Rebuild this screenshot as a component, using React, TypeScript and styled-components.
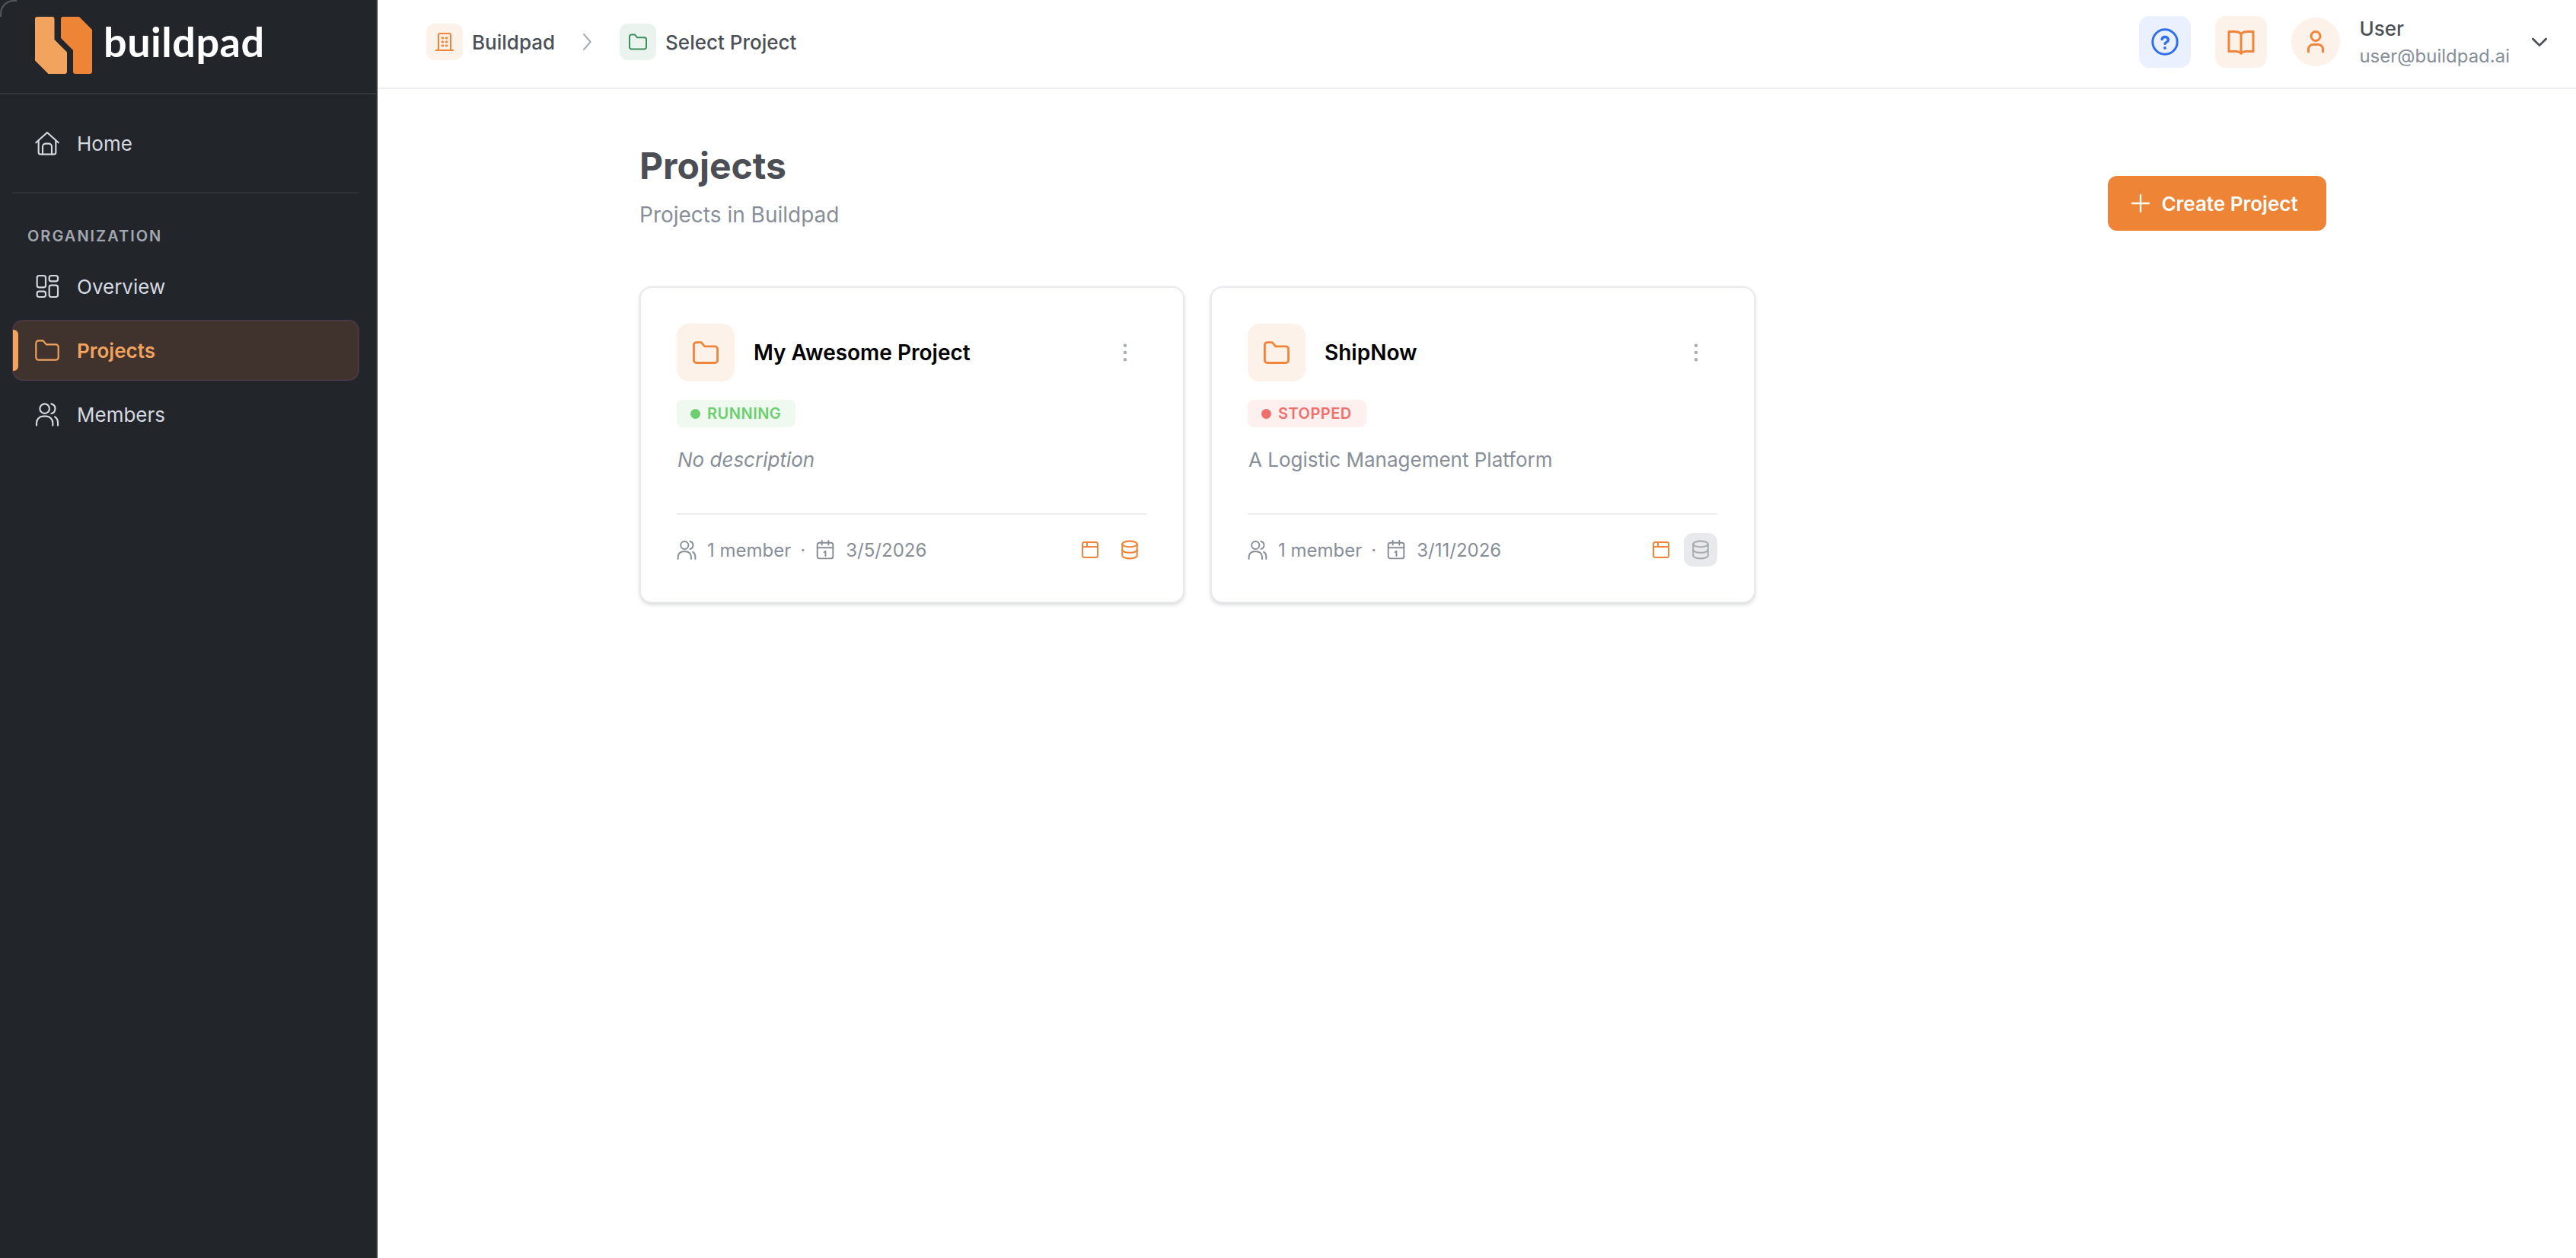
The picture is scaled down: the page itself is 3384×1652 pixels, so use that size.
import React from "react";
import styled, { createGlobalStyle } from "styled-components";

const Global = createGlobalStyle`
  html, body { margin: 0; padding: 0; background: #fff; }
  body { font-family: Inter, "Noto Sans", "Liberation Sans", sans-serif; -webkit-font-smoothing: antialiased; }
  * { box-sizing: border-box; }
`;

const Shell = styled.div`
  display: flex;
  min-height: 1652px;
  background: #fff;
`;

const Sidebar = styled.aside`
  position: relative;
  flex: 0 0 496px;
  background: #22252a;
  border-right: 2px solid #2f3237;
  &::before {
    content: "";
    position: absolute;
    top: 0;
    left: 0;
    width: 20px;
    height: 20px;
    border-top: 2px solid #55585c;
    border-left: 2px solid #55585c;
    border-top-left-radius: 18px;
  }
`;

const Brand = styled.div`
  height: 124px;
  padding: 22px 0 0 46px;
  display: flex;
  align-items: flex-start;
  gap: 15px;
  border-bottom: 2px solid #33363c;
`;

const Wordmark = styled.span`
  font-family: Lato, "Open Sans", sans-serif;
  font-weight: 700;
  font-size: 54px;
  line-height: 75px;
  letter-spacing: 0.5px;
  color: #fff;
  margin-top: -5px;
`;

const Nav = styled.nav`
  padding: 24px 22px 0 16px;
  display: flex;
  flex-direction: column;
`;

const NavDivider = styled.div`
  height: 2px;
  background: #2f3237;
  margin: 24px 0 42px;
`;

const SectionLabel = styled.div`
  font-size: 20px;
  line-height: 28px;
  font-weight: 600;
  letter-spacing: 2px;
  color: #a2a8b2;
  padding-left: 20px;
  margin-bottom: 12px;
`;

const NavList = styled.div`
  display: flex;
  flex-direction: column;
  gap: 4px;
`;

const NavRow = styled.div<{ $active?: boolean }>`
  position: relative;
  height: 80px;
  display: flex;
  align-items: center;
  gap: 23px;
  padding-left: 28px;
  border-radius: 14px;
  border: 2px solid ${(p) => (p.$active ? "#4a3944" : "transparent")};
  background: ${(p) => (p.$active ? "#40322c" : "transparent")};
  color: ${(p) => (p.$active ? "#f2a35e" : "#d5d9e0")};
  font-size: 26px;
  font-weight: ${(p) => (p.$active ? 600 : 400)};
`;

const ActiveBar = styled.span`
  position: absolute;
  left: -1px;
  top: 11px;
  bottom: 11px;
  width: 7px;
  background: #f2a35e;
  border-radius: 0 6px 6px 0;
`;

const Main = styled.main`
  flex: 1;
  min-width: 0;
  display: flex;
  flex-direction: column;
`;

const Topbar = styled.header`
  height: 117px;
  padding: 0 32px 5px 64px;
  display: flex;
  align-items: center;
  justify-content: space-between;
  border-bottom: 2px solid #eeeef3;
`;

const Crumbs = styled.div`
  display: flex;
  align-items: center;
  gap: 26px;
`;

const Crumb = styled.div`
  display: flex;
  align-items: center;
  gap: 12px;
  font-size: 26px;
  font-weight: 500;
  color: #4b5057;
`;

const CrumbIcon = styled.div<{ $bg: string; $fg: string }>`
  width: 48px;
  height: 48px;
  border-radius: 11px;
  display: flex;
  align-items: center;
  justify-content: center;
  background: ${(p) => p.$bg};
  color: ${(p) => p.$fg};
`;

const CrumbSeparator = styled.span`
  display: flex;
  color: #a7adb8;
  margin-right: 1px;
`;

const Account = styled.div`
  display: flex;
  align-items: center;
`;

const SquareButton = styled.button<{ $bg: string; $fg: string }>`
  width: 68px;
  height: 68px;
  margin-right: 32px;
  border: 0;
  padding: 0;
  border-radius: 14px;
  display: flex;
  align-items: center;
  justify-content: center;
  background: ${(p) => p.$bg};
  color: ${(p) => p.$fg};
`;

const Avatar = styled.div`
  width: 64px;
  height: 64px;
  border-radius: 50%;
  display: flex;
  align-items: center;
  justify-content: center;
  background: #fdf2e9;
  color: #f0853a;
  margin-right: 25px;
`;

const UserText = styled.div`
  display: flex;
  flex-direction: column;
  margin-right: 23px;
  padding-top: 2px;
`;

const UserName = styled.div`
  font-size: 26px;
  line-height: 36px;
  font-weight: 500;
  color: #4b5057;
`;

const UserMail = styled.div`
  font-size: 24px;
  line-height: 36px;
  color: #878e98;
`;

const AccountChevron = styled.span`
  display: flex;
  color: #4b5057;
`;

const Content = styled.div`
  padding: 71px 328px 0 344px;
`;

const PageHead = styled.div`
  display: flex;
  align-items: flex-end;
  justify-content: space-between;
`;

const PageTitle = styled.h1`
  margin: 0 0 13px;
  font-size: 48px;
  line-height: 60px;
  font-weight: 700;
  color: #4b4f55;
`;

const PageSub = styled.p`
  margin: 0;
  font-size: 28px;
  line-height: 42px;
  color: #878e98;
`;

const PrimaryButton = styled.button`
  width: 287px;
  height: 72px;
  border: 0;
  padding: 0 8px 0 0;
  border-radius: 12px;
  background: #ee8436;
  color: #fff;
  font-family: inherit;
  font-size: 26px;
  font-weight: 600;
  display: flex;
  align-items: center;
  justify-content: center;
  gap: 13px;
`;

const CardGrid = styled.div`
  margin-top: 73px;
  display: grid;
  grid-template-columns: repeat(3, 1fr);
  gap: 34px;
`;

const Card = styled.article`
  height: 416px;
  padding: 47px 48px 46px 47px;
  border: 2px solid #e8eaee;
  border-radius: 16px;
  background: #fff;
  box-shadow: 0 3px 5px rgba(30, 35, 45, 0.14), 0 0 0 1px rgba(30, 35, 45, 0.02);
  display: flex;
  flex-direction: column;
`;

const CardTop = styled.div`
  display: flex;
  align-items: center;
  gap: 25px;
`;

const CardIcon = styled.div`
  flex: 0 0 76px;
  height: 76px;
  border-radius: 16px;
  display: flex;
  align-items: center;
  justify-content: center;
  background: #fdf2e9;
  color: #f0853a;
`;

const CardTitle = styled.h2`
  flex: 1;
  margin: 0;
  font-size: 28px;
  font-weight: 600;
  color: #000;
`;

const Kebab = styled.div`
  width: 56px;
  height: 56px;
  display: flex;
  align-items: center;
  justify-content: center;
  color: #a7adb8;
`;

const StatusBadge = styled.div<{ $bg: string; $fg: string }>`
  align-self: flex-start;
  margin-top: 24px;
  height: 36px;
  padding: 0 19px 0 18px;
  border-radius: 8px;
  display: flex;
  align-items: center;
  gap: 9px;
  font-size: 20px;
  font-weight: 600;
  letter-spacing: 0.5px;
  background: ${(p) => p.$bg};
  color: ${(p) => p.$fg};
`;

const StatusDot = styled.span`
  width: 13px;
  height: 13px;
  border-radius: 50%;
  background: currentColor;
`;

const Description = styled.p<{ $empty?: boolean }>`
  margin: 23px 0 0 1px;
  font-size: 26px;
  line-height: 40px;
  color: #878e98;
  font-style: ${(p) => (p.$empty ? "italic" : "normal")};
`;

const CardFooter = styled.div`
  margin-top: auto;
  padding-top: 24px;
  border-top: 2px solid #eceef2;
  display: flex;
  align-items: center;
  justify-content: space-between;
`;

const Meta = styled.div`
  display: flex;
  align-items: center;
  font-size: 24px;
  color: #878e98;
`;

const MetaItem = styled.span`
  display: flex;
  align-items: center;
  gap: 14px;
`;

const MetaDot = styled.span`
  margin: 0 13px 0 12px;
  width: 7px;
  text-align: center;
`;

const ServiceIcons = styled.div`
  display: flex;
  gap: 8px;
`;

const ServiceChip = styled.div<{ $off?: boolean }>`
  width: 44px;
  height: 44px;
  border-radius: 12px;
  display: flex;
  align-items: center;
  justify-content: center;
  background: ${(p) => (p.$off ? "#e7e9ed" : "transparent")};
  color: ${(p) => (p.$off ? "#a8adb5" : "#f0853a")};
`;

type IconProps = { size?: number; stroke?: number };

const Svg = ({
  size = 32,
  stroke = 1.6,
  box = 24,
  children,
}: IconProps & { box?: number; children: React.ReactNode }) => (
  <svg
    width={size}
    height={size}
    viewBox={`0 0 ${box} ${box}`}
    fill="none"
    stroke="currentColor"
    strokeWidth={stroke}
    strokeLinecap="round"
    strokeLinejoin="round"
    style={{ flexShrink: 0 }}
  >
    {children}
  </svg>
);

const HomeIcon = (p: IconProps) => (
  <Svg {...p}>
    <path d="M1 11.5 12 1.5l11 10" />
    <path d="M3.5 9.5V21a2 2 0 0 0 2 2h13a2 2 0 0 0 2-2V9.5" />
    <path d="M7.5 23v-7.5a3 3 0 0 1 3-3h3a3 3 0 0 1 3 3V23" />
  </Svg>
);

const GridIcon = (p: IconProps) => (
  <Svg {...p}>
    <rect x="2" y="1.5" width="8.5" height="11.5" rx="2" />
    <rect x="14" y="1.5" width="8.5" height="5.5" rx="2" />
    <rect x="14" y="11" width="8.5" height="11.5" rx="2" />
    <rect x="2" y="17" width="8.5" height="5.5" rx="2" />
  </Svg>
);

const FolderIcon = (p: IconProps) => (
  <Svg {...p}>
    <path d="M1 5a2.5 2.5 0 0 1 2.5-2.5h4.4l3.2 3.8h9.4A2.5 2.5 0 0 1 23 8.800v10.200a2.5 2.5 0 0 1-2.5 2.500h-17A2.5 2.5 0 0 1 1 19z" />
  </Svg>
);

const UsersIcon = (p: IconProps) => (
  <Svg {...p}>
    <circle cx="9.5" cy="6.5" r="4.7" />
    <path d="M16 1.800a4.800 4.800 0 0 1 0 9.400" />
    <path d="M1.500 23v-2.500a6.500 6.500 0 0 1 6.500-6.500h3a6.500 6.500 0 0 1 6.500 6.500V23" />
    <path d="M19.500 14.600a6.500 6.500 0 0 1 3 5.400v3" />
  </Svg>
);

const CalendarIcon = (p: IconProps) => (
  <Svg {...p}>
    <rect x="2.500" y="3.500" width="19" height="19" rx="2.500" />
    <path d="M2.500 9.500h19M8 1v5M16 1v5" />
    <path d="M10.800 14.800l1.600-1v5.500" />
  </Svg>
);

const BuildingIcon = (p: IconProps) => (
  <Svg {...p}>
    <path d="M4 23V3a2 2 0 0 1 2-2h12a2 2 0 0 1 2 2v20" />
    <path d="M.800 23h22.400" />
    <path d="M9 7h.8M14.200 7h.8M9 12h.8M14.200 12h.8M9 17h.8M14.200 17h.8" strokeWidth={2.8} />
  </Svg>
);

const HelpIcon = (p: IconProps) => (
  <Svg size={36} stroke={3} box={36} {...p}>
    <circle cx="18" cy="18" r="16.200" />
    <path d="M14 14.500a4.300 4.300 0 0 1 8.400.900c0 2.600-4.300 3.200-4.300 5" strokeWidth={3.4} />
    <path d="M18 26v.1" strokeWidth={3.8} />
  </Svg>
);

const BookIcon = (p: IconProps) => (
  <Svg size={36} stroke={3} box={36} {...p}>
    <path d="M18 7.500C16 5.500 13 4.500 10 4.500H2V30.500H11C14 30.500 16.500 31.500 18 33C19.500 31.500 22 30.500 25 30.500H34V4.500H26C23 4.500 20 5.500 18 7.500Z" />
    <path d="M18 7.500V33" />
  </Svg>
);

const PersonIcon = (p: IconProps) => (
  <Svg size={30} stroke={3} box={30} {...p}>
    <circle cx="15" cy="7.500" r="6" />
    <path d="M5.500 28v-3.500a6 6 0 0 1 6-6h7a6 6 0 0 1 6 6V28" />
  </Svg>
);

const AppIcon = (p: IconProps) => (
  <Svg size={24} stroke={2} {...p}>
    <rect x="2" y="2" width="20" height="20" rx="2.500" />
    <path d="M2 8h20M8 2v6" />
  </Svg>
);

const DatabaseIcon = (p: IconProps) => (
  <Svg size={26} stroke={1.9} {...p}>
    <ellipse cx="12" cy="5" rx="9" ry="3.500" />
    <path d="M3 5v14c0 1.900 4 3.500 9 3.500s9-1.600 9-3.500V5" />
    <path d="M3 12c0 1.900 4 3.500 9 3.500s9-1.600 9-3.500" />
  </Svg>
);

const ChevronRight = () => (
  <Svg size={32} stroke={1.5}>
    <path d="m9 4.500 6.500 7.500L9 19.500" />
  </Svg>
);

const ChevronDown = () => (
  <Svg size={32} stroke={2}>
    <path d="m5.500 9 6.500 6.500L18.500 9" />
  </Svg>
);

const PlusIcon = () => (
  <Svg size={28} stroke={2}>
    <path d="M12 2.500v19M2.500 12h19" />
  </Svg>
);

const KebabIcon = () => (
  <Svg size={32} stroke={3.400}>
    <path d="M12 5v.01M12 12v.01M12 19v.01" />
  </Svg>
);

const LogoMark = () => (
  <svg width="75" height="75" viewBox="0 0 75 75">
    <path
      d="M3 0H22.500A3 3 0 0 1 25.500 3V30L42 46.500V72A3 3 0 0 1 39 75H17.500L0 57.500V3A3 3 0 0 1 3 0Z"
      fill="#f2a35e"
    />
    <path
      d="M36 0H58L75 17V72A3 3 0 0 1 72 75H53A3 3 0 0 1 50 72V44L34 28V3A3 3 0 0 1 36 0Z"
      fill="#ee8436"
    />
  </svg>
);

type ProjectCardProps = {
  name: string;
  running: boolean;
  description?: string;
  date: string;
  dbOff?: boolean;
};

const ProjectCard = ({ name, running, description, date, dbOff }: ProjectCardProps) => (
  <Card>
    <CardTop>
      <CardIcon>
        <FolderIcon size={34} stroke={2} />
      </CardIcon>
      <CardTitle>{name}</CardTitle>
      <Kebab>
        <KebabIcon />
      </Kebab>
    </CardTop>
    <StatusBadge $bg={running ? "#eff9f0" : "#fdf0ef"} $fg={running ? "#6ccf6f" : "#ef6f6c"}>
      <StatusDot />
      {running ? "RUNNING" : "STOPPED"}
    </StatusBadge>
    <Description $empty={!description}>{description ?? "No description"}</Description>
    <CardFooter>
      <Meta>
        <MetaItem>
          <UsersIcon size={26} stroke={1.8} />1 member
        </MetaItem>
        <MetaDot>·</MetaDot>
        <MetaItem>
          <CalendarIcon size={26} stroke={1.8} />
          {date}
        </MetaItem>
      </Meta>
      <ServiceIcons>
        <ServiceChip>
          <AppIcon />
        </ServiceChip>
        <ServiceChip $off={dbOff}>
          <DatabaseIcon />
        </ServiceChip>
      </ServiceIcons>
    </CardFooter>
  </Card>
);

export default function App() {
  return (
    <Shell>
      <Global />
      <Sidebar>
        <Brand>
          <LogoMark />
          <Wordmark>buildpad</Wordmark>
        </Brand>
        <Nav>
          <NavRow>
            <HomeIcon />
            Home
          </NavRow>
          <NavDivider />
          <SectionLabel>ORGANIZATION</SectionLabel>
          <NavList>
            <NavRow>
              <GridIcon />
              Overview
            </NavRow>
            <NavRow $active>
              <ActiveBar />
              <FolderIcon />
              Projects
            </NavRow>
            <NavRow>
              <UsersIcon />
              Members
            </NavRow>
          </NavList>
        </Nav>
      </Sidebar>
      <Main>
        <Topbar>
          <Crumbs>
            <Crumb>
              <CrumbIcon $bg="#fdf2e9" $fg="#f0853a">
                <BuildingIcon size={24} stroke={2} />
              </CrumbIcon>
              Buildpad
            </Crumb>
            <CrumbSeparator>
              <ChevronRight />
            </CrumbSeparator>
            <Crumb>
              <CrumbIcon $bg="#ebf3ee" $fg="#3d8f5c">
                <FolderIcon size={24} stroke={2} />
              </CrumbIcon>
              Select Project
            </Crumb>
          </Crumbs>
          <Account>
            <SquareButton $bg="#eaf0fe" $fg="#2f6fed">
              <HelpIcon />
            </SquareButton>
            <SquareButton $bg="#fdf2e9" $fg="#f0853a">
              <BookIcon />
            </SquareButton>
            <Avatar>
              <PersonIcon />
            </Avatar>
            <UserText>
              <UserName>User</UserName>
              <UserMail>user@buildpad.ai</UserMail>
            </UserText>
            <AccountChevron>
              <ChevronDown />
            </AccountChevron>
          </Account>
        </Topbar>
        <Content>
          <PageHead>
            <div>
              <PageTitle>Projects</PageTitle>
              <PageSub>Projects in Buildpad</PageSub>
            </div>
            <PrimaryButton>
              <PlusIcon />
              Create Project
            </PrimaryButton>
          </PageHead>
          <CardGrid>
            <ProjectCard name="My Awesome Project" running date="3/5/2026" />
            <ProjectCard
              name="ShipNow"
              running={false}
              description="A Logistic Management Platform"
              date="3/11/2026"
              dbOff
            />
          </CardGrid>
        </Content>
      </Main>
    </Shell>
  );
}
